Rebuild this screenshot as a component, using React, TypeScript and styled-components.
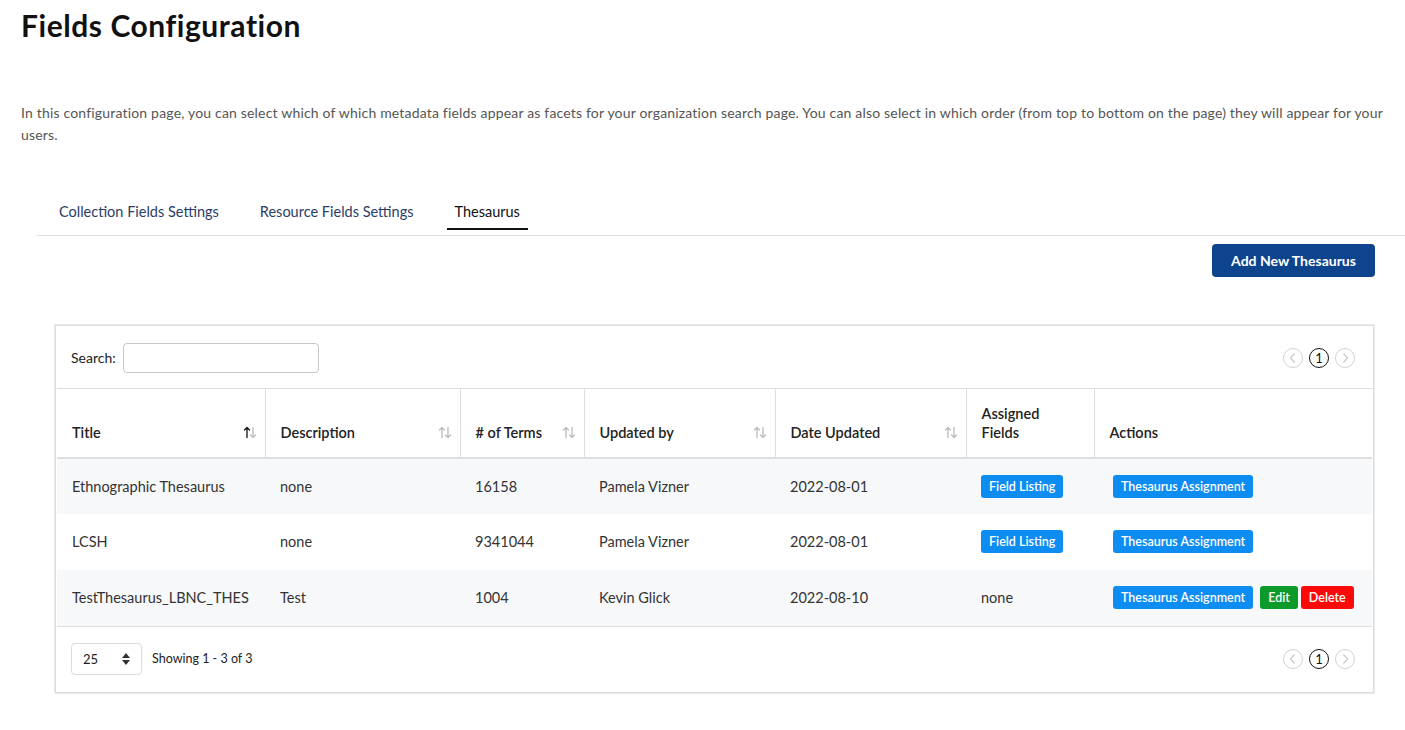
import React from "react";
import styled, { createGlobalStyle } from "styled-components";

const Global = createGlobalStyle`
  html, body { margin: 0; padding: 0; background: #fff; }
  body { font-family: Lato, "Noto Sans", sans-serif; color: #222; }
  * { box-sizing: border-box; }
`;

const Page = styled.div`
  width: 1405px;
  min-height: 730px;
  padding-top: 5px;
`;

const Title = styled.h1`
  margin: 0 0 0 21px;
  font-family: Lato, sans-serif;
  font-weight: 700;
  font-size: 30px;
  line-height: 40px;
  color: #111;
  letter-spacing: 0.55px;
`;

const Intro = styled.p`
  margin: 57px 0 0 21px;
  width: 1378px;
  font-family: Lato, sans-serif;
  font-size: 14px;
  line-height: 22px;
  letter-spacing: 0.18px;
  color: #555;
`;

const TabBar = styled.div`
  margin: 49px 0 0 36px;
  padding: 0 0 5px 15px;
  display: flex;
  gap: 25px;
  border-bottom: 1px solid #dee2e6;
`;

const Tab = styled.div<{ $active?: boolean }>`
  padding: 8px 8px 7px;
  font-family: Lato, sans-serif;
  font-size: 14.5px;
  line-height: 18px;
  color: ${(p) => (p.$active ? "#111" : "#2b3d68")};
  border-bottom: 2px solid ${(p) => (p.$active ? "#111" : "transparent")};
`;

const ButtonRow = styled.div`
  display: flex;
  justify-content: flex-end;
  padding: 8px 30px 0 0;
`;

const PrimaryButton = styled.button`
  height: 33px;
  width: 163px;
  border: none;
  border-radius: 4px;
  background: #0e438e;
  color: #fff;
  font-family: Lato, sans-serif;
  font-weight: 700;
  font-size: 14px;
`;

const Card = styled.div`
  margin: 48px 31px 0 55px;
  border: 1px solid #dcdcdc;
  box-shadow: 0 0 0 1px #ececec;
  padding: 1px;
  background: #fff;
`;

const ToolRow = styled.div`
  height: 61px;
  display: flex;
  align-items: center;
  justify-content: space-between;
  padding: 0 17px 0 14px;
`;

const SearchLabel = styled.label`
  display: flex;
  align-items: center;
  gap: 7px;
  font-size: 14px;
  color: #222;
`;

const SearchInput = styled.input`
  width: 196px;
  height: 30px;
  border: 1px solid #c8c8c8;
  border-radius: 4px;
`;

const Pager = styled.div`
  display: flex;
  align-items: center;
  gap: 6px;
`;

const PageCircle = styled.span<{ $current?: boolean }>`
  width: 20px;
  height: 20px;
  border-radius: 50%;
  border: 1px solid ${(p) => (p.$current ? "#111" : "#d2d2d2")};
  display: flex;
  align-items: center;
  justify-content: center;
  font-size: 13px;
  color: ${(p) => (p.$current ? "#111" : "#ccc")};
`;

const Table = styled.table`
  width: 100%;
  border-collapse: collapse;
  table-layout: fixed;
`;

const Th = styled.th<{ $w: number }>`
  width: ${(p) => p.$w}px;
  height: 69px;
  padding: 0 8px 15px 15px;
  vertical-align: bottom;
  text-align: left;
  font-size: 14.5px;
  font-weight: 600;
  color: #222;
  line-height: 19px;
  border-top: 1px solid #dedede;
  border-bottom: 2px solid #dedede;
  border-right: 1px solid #dedede;
  &:last-child { border-right: none; }
`;

const HeadInner = styled.div`
  display: flex;
  align-items: center;
  justify-content: space-between;
`;

const Tr = styled.tr<{ $striped?: boolean }>`
  background: ${(p) => (p.$striped ? "#f7f8fa" : "#fff")};
`;

const Td = styled.td`
  height: 56px;
  padding: 0 8px 0 15px;
  font-size: 14.5px;
  color: #333;
  white-space: nowrap;
`;

const Actions = styled.div`
  display: flex;
  gap: 3px;
  padding-left: 4px;
  & > :first-child { margin-right: 4px; }
`;

const SmallButton = styled.button<{ $color: string }>`
  height: 23px;
  padding: 0 8px;
  border: none;
  border-radius: 3px;
  background: ${(p) => p.$color};
  color: #fff;
  font-family: Lato, sans-serif;
  font-weight: 600;
  font-size: 12.5px;
`;

const Footer = styled.div`
  height: 65px;
  border-top: 1px solid #dedede;
  display: flex;
  align-items: center;
  justify-content: space-between;
  padding: 0 17px 0 14px;
`;

const FooterLeft = styled.div`
  display: flex;
  align-items: center;
  gap: 10px;
  font-size: 12.5px;
  color: #222;
`;

const SelectBox = styled.div`
  width: 71px;
  height: 32px;
  border: 1px solid #dcdcdc;
  border-radius: 4px;
  display: flex;
  align-items: center;
  justify-content: space-between;
  padding: 0 10px 0 11px;
  font-size: 13px;
`;

const SortIcon = ({ active }: { active?: boolean }) => (
  <svg width="14" height="13" viewBox="0 0 14 13">
    <g fill="none" strokeWidth="1.3" strokeLinecap="round" strokeLinejoin="round">
      <g stroke={active ? "#111" : "#bbb"}>
        <path d="M4 11.5V1.5M1.5 4L4 1.5L6.5 4" />
      </g>
      <g stroke="#bbb">
        <path d="M10 1.5V11.5M7.5 9L10 11.5L12.5 9" />
      </g>
    </g>
  </svg>
);

const Chevron = ({ dir }: { dir: "l" | "r" }) => (
  <svg width="10" height="12" viewBox="0 0 10 12">
    <path
      d={dir === "l" ? "M6.5 1.5L2.5 6L6.5 10.5" : "M3.5 1.5L7.5 6L3.5 10.5"}
      fill="none"
      stroke="#c8c8c8"
      strokeWidth="1.2"
    />
  </svg>
);

const Carets = () => (
  <svg width="10" height="14" viewBox="0 0 10 14">
    <path d="M5 1L9 6H1Z M5 13L1 8H9Z" fill="#333" />
  </svg>
);

const PagerView = () => (
  <Pager>
    <PageCircle><Chevron dir="l" /></PageCircle>
    <PageCircle $current>1</PageCircle>
    <PageCircle><Chevron dir="r" /></PageCircle>
  </Pager>
);

const columns: { label: React.ReactNode; w: number; sort?: boolean; active?: boolean }[] = [
  { label: "Title", w: 208, sort: true, active: true },
  { label: "Description", w: 195, sort: true },
  { label: "# of Terms", w: 124, sort: true },
  { label: "Updated by", w: 191, sort: true },
  { label: "Date Updated", w: 191, sort: true },
  { label: <>Assigned<br />Fields</>, w: 128 },
  { label: "Actions", w: 278 },
];

const rows = [
  { title: "Ethnographic Thesaurus", desc: "none", terms: "16158", by: "Pamela Vizner", date: "2022-08-01", listing: true, edit: false },
  { title: "LCSH", desc: "none", terms: "9341044", by: "Pamela Vizner", date: "2022-08-01", listing: true, edit: false },
  { title: "TestThesaurus_LBNC_THES", desc: "Test", terms: "1004", by: "Kevin Glick", date: "2022-08-10", listing: false, edit: true },
];

export default function App() {
  return (
    <Page>
      <Global />
      <Title>Fields Configuration</Title>
      <Intro>
        In this configuration page, you can select which of which metadata fields appear as facets for your organization search page. You can also select in which order (from top to bottom on the page) they will appear for your users.
      </Intro>
      <TabBar>
        <Tab>Collection Fields Settings</Tab>
        <Tab>Resource Fields Settings</Tab>
        <Tab $active>Thesaurus</Tab>
      </TabBar>
      <ButtonRow>
        <PrimaryButton>Add New Thesaurus</PrimaryButton>
      </ButtonRow>
      <Card>
        <ToolRow>
          <SearchLabel>
            Search:
            <SearchInput />
          </SearchLabel>
          <PagerView />
        </ToolRow>
        <Table>
          <thead>
            <tr>
              {columns.map((c, i) => (
                <Th key={i} $w={c.w}>
                  <HeadInner>
                    <span>{c.label}</span>
                    {c.sort && <SortIcon active={c.active} />}
                  </HeadInner>
                </Th>
              ))}
            </tr>
          </thead>
          <tbody>
            {rows.map((r, i) => (
              <Tr key={i} $striped={i % 2 === 0}>
                <Td>{r.title}</Td>
                <Td>{r.desc}</Td>
                <Td>{r.terms}</Td>
                <Td>{r.by}</Td>
                <Td>{r.date}</Td>
                <Td>{r.listing ? <SmallButton $color="#0d8cf2">Field Listing</SmallButton> : "none"}</Td>
                <Td>
                  <Actions>
                    <SmallButton $color="#0d8cf2">Thesaurus Assignment</SmallButton>
                    {r.edit && <SmallButton $color="#0c9a2b">Edit</SmallButton>}
                    {r.edit && <SmallButton $color="#fb0a0a">Delete</SmallButton>}
                  </Actions>
                </Td>
              </Tr>
            ))}
          </tbody>
        </Table>
        <Footer>
          <FooterLeft>
            <SelectBox>
              25
              <Carets />
            </SelectBox>
            Showing 1 - 3 of 3
          </FooterLeft>
          <PagerView />
        </Footer>
      </Card>
    </Page>
  );
}
